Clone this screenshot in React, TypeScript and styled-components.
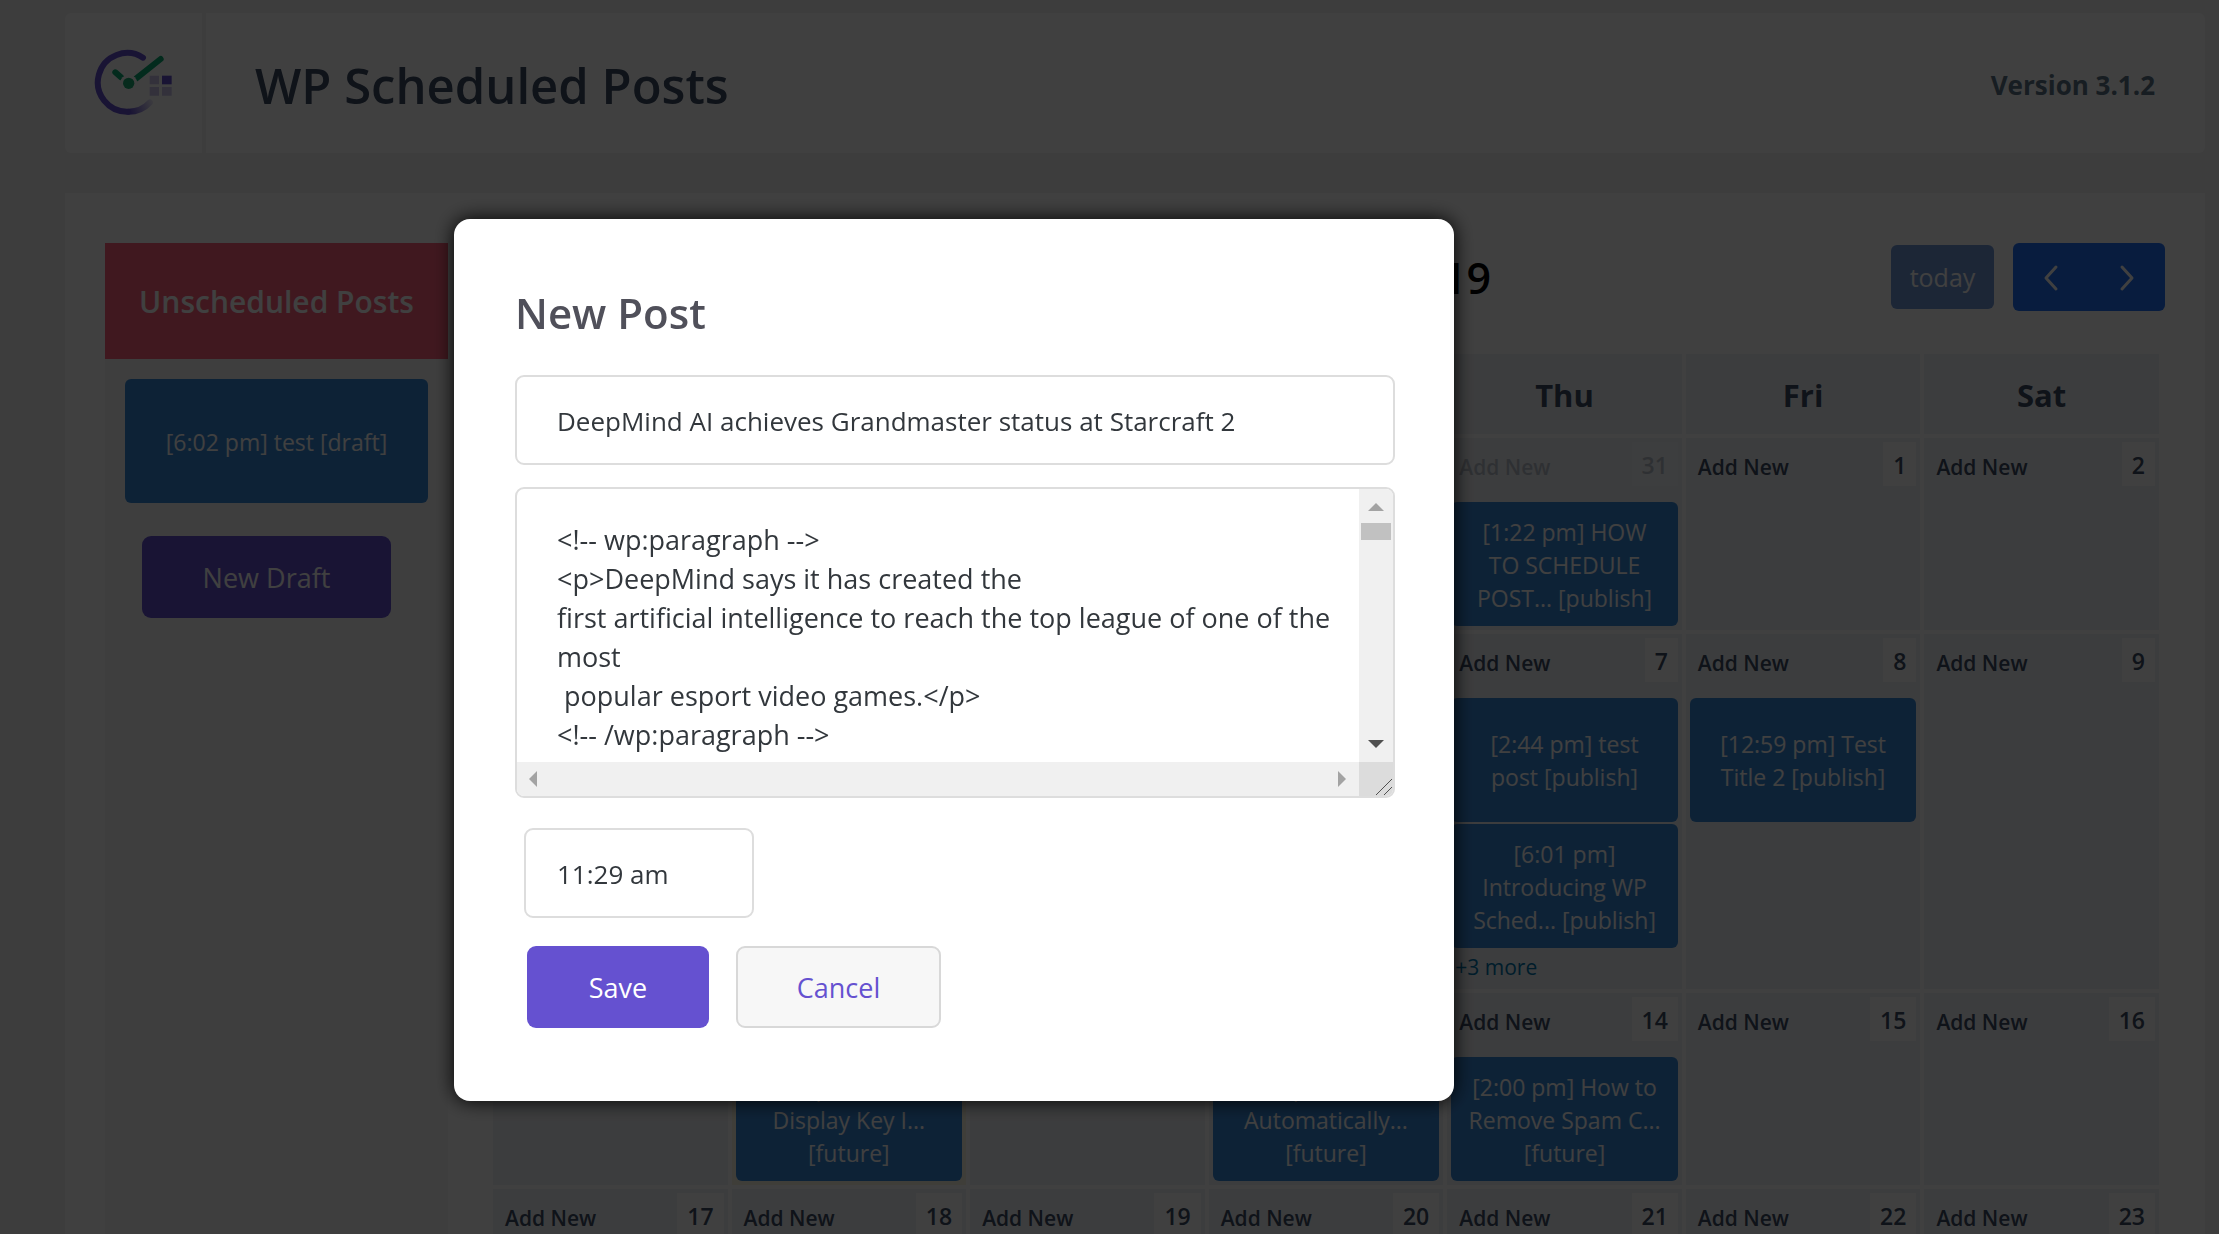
import React, { useState } from "react";
import styled, { createGlobalStyle, css } from "styled-components";

const GlobalStyle = createGlobalStyle`
  *, *::before, *::after { box-sizing: border-box; }
  body {
    margin: 0;
    background: #f1f1f1;
    font-family: "Open Sans", "Noto Sans", sans-serif;
    color: #3c4b64;
  }
  button, input, textarea { font: inherit; margin: 0; }
`;

const Page = styled.div`
  height: 100vh;
  overflow: hidden;
  padding: 13px 14px 0 65px;
`;

const Header = styled.header`
  display: flex;
  align-items: stretch;
  height: 140px;
  background: #fff;
  border-radius: 6px;
`;

const LogoCell = styled.div`
  display: flex;
  align-items: center;
  justify-content: center;
  width: 141px;
  border-right: 4px solid #f1f1f1;
`;

const HeaderTitle = styled.h1`
  flex: 1;
  margin: 0;
  padding: 3px 0 0 49px;
  align-self: center;
  font-size: 49px;
  line-height: 68px;
  font-weight: 600;
`;

const Version = styled.p`
  margin: 0;
  padding: 3px 50px 0 0;
  align-self: center;
  color: #5c7486;
  font-size: 26px;
  line-height: 36px;
  font-weight: 700;
`;

const Panel = styled.main`
  display: flex;
  gap: 41px;
  margin-top: 40px;
  padding: 50px 40px 0;
  background: #fff;
`;

const Sidebar = styled.aside`
  flex: none;
  width: 343px;
  min-height: 100vh;
  background: #f8f8f8;
`;

const SidebarTitle = styled.h2`
  margin: 0 0 20px;
  padding-top: 2px;
  background: #fd617c;
  color: #fff;
  font-size: 30px;
  line-height: 114px;
  font-weight: 600;
  text-align: center;
`;

const SidebarBody = styled.div`
  display: flex;
  flex-direction: column;
  align-items: flex-start;
  gap: 33px;
  padding: 0 20px;
`;

const EventCard = styled.div`
  display: flex;
  align-items: center;
  justify-content: center;
  width: 100%;
  height: 124px;
  padding-top: 2px;
  border-radius: 6px;
  background: #3788d8;
  color: #fff;
  font-size: 23px;
  line-height: 33px;
  text-align: center;
  white-space: pre-line;
`;

const buttonBase = css`
  height: 82px;
  padding: 2px 0 0;
  border-radius: 9px;
  font-size: 27px;
  line-height: 36px;
  cursor: pointer;
`;

const PrimaryButton = styled.button<{ $width: number; $weight?: number }>`
  ${buttonBase}
  width: ${(p) => p.$width}px;
  border: 0;
  background: #6551d0;
  color: #fff;
  font-weight: ${(p) => p.$weight ?? 400};
`;

const SecondaryButton = styled.button`
  ${buttonBase}
  width: 205px;
  border: 2px solid #d8d8d8;
  background: #f7f7f7;
  color: #6551d0;
`;

const DraftSlot = styled.div`
  padding-left: 17px;
`;

const Calendar = styled.section`
  flex: 1;
  min-width: 0;
`;

const Toolbar = styled.div`
  display: grid;
  grid-template-columns: 1fr auto 1fr;
  align-items: center;
  height: 68px;
  margin-bottom: 39px;
`;

const MonthTitle = styled.h2`
  grid-column: 2;
  margin: 0;
  padding-top: 2px;
  color: #000;
  font-size: 43px;
  line-height: 64px;
  font-weight: 600;
`;

const ToolbarActions = styled.div`
  display: flex;
  justify-content: flex-end;
  align-items: center;
  gap: 19px;
`;

const TodayButton = styled.button`
  width: 103px;
  height: 64px;
  padding: 0;
  border: 0;
  border-radius: 6px;
  background: #7098d8;
  color: #fff;
  font-size: 25px;
`;

const NavGroup = styled.div`
  display: flex;
  border-radius: 6px;
  overflow: hidden;
`;

const NavButton = styled.button`
  display: flex;
  align-items: center;
  justify-content: center;
  width: 76px;
  height: 68px;
  padding: 2px 0 0;
  border: 0;
  background: #2070f8;
  cursor: pointer;
`;

const MonthTable = styled.table`
  width: calc(100% - 2px);
  table-layout: fixed;
  border-spacing: 4px;
`;

const WeekdayCell = styled.th`
  height: 80px;
  padding: 2px 0 0;
  background: #f0f3f7;
  font-size: 31px;
  line-height: 42px;
  font-weight: 700;
`;

const DayCell = styled.td<{ $today?: boolean }>`
  height: 192px;
  padding: 4px;
  vertical-align: top;
  background: ${(p) => (p.$today ? "#fcf8e3" : "#f0f3f7")};
`;

const DayTop = styled.div<{ $muted?: boolean }>`
  display: flex;
  justify-content: space-between;
  height: 44px;
  margin-bottom: 16px;
  opacity: ${(p) => (p.$muted ? 0.3 : 1)};
`;

const AddNew = styled.button`
  padding: 5px 0 0 8px;
  border: 0;
  background: none;
  color: inherit;
  font-size: 21px;
  line-height: 32px;
  font-weight: 600;
  cursor: pointer;
`;

const DayNumber = styled.span`
  padding: 2px 10px 0;
  background: #fff;
  font-size: 23px;
  line-height: 42px;
  font-weight: 600;
`;

const EventList = styled.div`
  display: flex;
  flex-direction: column;
  gap: 2px;
`;

const MoreLink = styled.a`
  display: block;
  padding: 3px 4px 2px;
  color: #0073aa;
  font-size: 21px;
  line-height: 32px;
  text-decoration: none;
`;

const Overlay = styled.div`
  position: fixed;
  inset: 0;
  display: flex;
  align-items: flex-start;
  padding: 219px 0 0 454px;
  background: rgba(0, 0, 0, 0.75);
`;

const Modal = styled.form`
  width: 1000px;
  padding: 64px 59px 73px 61px;
  border-radius: 16px;
  background: #fff;
  box-shadow: 0 0 20px #000;
`;

const ModalTitle = styled.h2`
  margin: 0 0 32px;
  color: #50505a;
  font-size: 42px;
  line-height: 60px;
  font-weight: 600;
`;

const fieldBox = css`
  display: block;
  border: 2px solid #ddd;
  border-radius: 9px;
  background: #fff;
  color: #32373c;
`;

const TitleInput = styled.input`
  ${fieldBox}
  width: 100%;
  height: 90px;
  padding: 2px 40px 0;
  font-size: 26px;
  outline: none;
`;

const ContentBox = styled.div`
  ${fieldBox}
  display: grid;
  grid-template-columns: 1fr 34px;
  grid-template-rows: 273px 34px;
  margin: 22px 0 30px;
  font-size: 27px;
  overflow: hidden;
`;

const ContentArea = styled.textarea`
  display: block;
  width: 100%;
  height: 100%;
  padding: 31px 24px 0 40px;
  border: 0;
  outline: none;
  resize: none;
  overflow: hidden;
  background: none;
  color: inherit;
  line-height: 39px;
`;

const ScrollTrack = styled.div<{ $vertical?: boolean }>`
  display: flex;
  flex-direction: ${(p) => (p.$vertical ? "column" : "row")};
  justify-content: space-between;
  background: #f0f0f0;
`;

const ScrollStart = styled.div`
  display: flex;
  flex-direction: column;
  align-items: center;
`;

const ScrollArrow = styled.svg`
  display: block;
  width: 34px;
  height: 34px;
`;

const ScrollThumb = styled.div`
  width: 30px;
  height: 17px;
  background: #c1c1c1;
`;

const ResizeCorner = styled.svg`
  display: block;
  width: 34px;
  height: 34px;
  background: #dcdcdc;
`;

const TimeRow = styled.div`
  padding-left: 9px;
`;

const TimeInput = styled.input`
  ${fieldBox}
  width: 230px;
  height: 90px;
  padding: 2px 31px 0;
  font-size: 26px;
  outline: none;
`;

const Actions = styled.div`
  display: flex;
  gap: 27px;
  margin-top: 28px;
  padding-left: 12px;
`;

const Logo = () => (
  <svg width="80" height="70" viewBox="0 0 240 210" fill="none" role="img" aria-label="WP Scheduled Posts logo">
    <defs>
      <linearGradient id="arcFade" gradientUnits="userSpaceOnUse" x1="105" y1="185" x2="175" y2="155">
        <stop offset="0" stopColor="#6551d0" />
        <stop offset="1" stopColor="#6551d0" stopOpacity="0.1" />
      </linearGradient>
    </defs>
    <path d="M147 29 A88 88 0 1 0 103 191" stroke="#6551d0" strokeWidth="18" strokeLinecap="round" />
    <path d="M103 191 A88 88 0 0 0 168 163" stroke="url(#arcFade)" strokeWidth="18" strokeLinecap="round" />
    <path d="M64 73 L81 88" stroke="#0cac75" strokeWidth="18" strokeLinecap="round" />
    <path d="M200 33 L126 92" stroke="#0cac75" strokeWidth="18" strokeLinecap="round" />
    <circle cx="104" cy="106" r="26" fill="#fff" />
    <circle cx="104" cy="106" r="17" fill="#1eac75" />
    <path d="M167 83h28v26h-28zM167 117h28v26h-28zM204 117h29v26h-29z" fill="#c9c3ec" />
    <path d="M204 83h29v26h-29z" fill="#6551d0" />
  </svg>
);

const Chevron = ({ d }: { d: string }) => (
  <svg width="18" height="28" viewBox="0 0 18 28" fill="none" stroke="#fff" strokeWidth="3" strokeLinecap="round" strokeLinejoin="round" aria-hidden="true">
    <path d={d} />
  </svg>
);

type Day = { n: number; muted?: boolean; today?: boolean; events?: string[]; more?: string };

const weekdays = ["Sun", "Mon", "Tue", "Wed", "Thu", "Fri", "Sat"];

const weeks: Day[][] = [
  [
    { n: 27, muted: true },
    { n: 28, muted: true },
    { n: 29, muted: true },
    { n: 30, muted: true },
    { n: 31, muted: true, events: ["[1:22 pm] HOW\nTO SCHEDULE\nPOST... [publish]"] },
    { n: 1 },
    { n: 2 },
  ],
  [
    { n: 3 },
    { n: 4 },
    { n: 5 },
    { n: 6 },
    {
      n: 7,
      events: ["[2:44 pm] test\npost [publish]", "[6:01 pm]\nIntroducing WP\nSched... [publish]"],
      more: "+3 more",
    },
    { n: 8, events: ["[12:59 pm] Test\nTitle 2 [publish]"] },
    { n: 9 },
  ],
  [
    { n: 10 },
    { n: 11, today: true, events: ["[2:00 pm] How to\nDisplay Key I...\n[future]"] },
    { n: 12 },
    { n: 13, events: ["[2:00 pm] How to\nAutomatically...\n[future]"] },
    { n: 14, events: ["[2:00 pm] How to\nRemove Spam C...\n[future]"] },
    { n: 15 },
    { n: 16 },
  ],
  [{ n: 17 }, { n: 18 }, { n: 19 }, { n: 20 }, { n: 21 }, { n: 22 }, { n: 23 }],
];

const postContent = `<!-- wp:paragraph -->
<p>DeepMind says it has created the
first artificial intelligence to reach the top league of one of the most
 popular esport video games.</p>
<!-- /wp:paragraph -->`;

const MonthView = () => (
  <MonthTable>
    <thead>
      <tr>
        {weekdays.map((w) => (
          <WeekdayCell key={w} scope="col">
            {w}
          </WeekdayCell>
        ))}
      </tr>
    </thead>
    <tbody>
      {weeks.map((week, i) => (
        <tr key={i}>
          {week.map((day) => (
            <DayCell key={day.n} $today={day.today}>
              <DayTop $muted={day.muted}>
                <AddNew type="button">Add New</AddNew>
                <DayNumber>{day.n}</DayNumber>
              </DayTop>
              {day.events && (
                <EventList>
                  {day.events.map((e) => (
                    <EventCard key={e}>{e}</EventCard>
                  ))}
                </EventList>
              )}
              {day.more && <MoreLink href="#more">{day.more}</MoreLink>}
            </DayCell>
          ))}
        </tr>
      ))}
    </tbody>
  </MonthTable>
);

const NewPostDialog = () => {
  const [title, setTitle] = useState("DeepMind AI achieves Grandmaster status at Starcraft 2");
  const [content, setContent] = useState(postContent);
  const [time, setTime] = useState("11:29 am");

  return (
    <Overlay>
      <Modal role="dialog" aria-labelledby="new-post-title" onSubmit={(e) => e.preventDefault()}>
        <ModalTitle id="new-post-title">New Post</ModalTitle>
        <TitleInput aria-label="Title" value={title} onChange={(e) => setTitle(e.target.value)} />
        <ContentBox>
          <ContentArea aria-label="Content" value={content} onChange={(e) => setContent(e.target.value)} />
          <ScrollTrack $vertical aria-hidden="true">
            <ScrollStart>
              <ScrollArrow viewBox="0 0 34 34">
                <path d="M9 22h16l-8-8z" fill="#a3a3a3" />
              </ScrollArrow>
              <ScrollThumb />
            </ScrollStart>
            <ScrollArrow viewBox="0 0 34 34">
              <path d="M9 12h16l-8 8z" fill="#505050" />
            </ScrollArrow>
          </ScrollTrack>
          <ScrollTrack aria-hidden="true">
            <ScrollArrow viewBox="0 0 34 34">
              <path d="M20 9v16l-8-8z" fill="#a3a3a3" />
            </ScrollArrow>
            <ScrollArrow viewBox="0 0 34 34">
              <path d="M13 9v16l8-8z" fill="#a3a3a3" />
            </ScrollArrow>
          </ScrollTrack>
          <ResizeCorner viewBox="0 0 34 34" aria-hidden="true">
            <path d="M17 33L33 17M25 33L33 25" stroke="#505050" />
          </ResizeCorner>
        </ContentBox>
        <TimeRow>
          <TimeInput aria-label="Time" value={time} onChange={(e) => setTime(e.target.value)} />
        </TimeRow>
        <Actions>
          <PrimaryButton type="submit" $width={182} $weight={500}>
            Save
          </PrimaryButton>
          <SecondaryButton type="button">Cancel</SecondaryButton>
        </Actions>
      </Modal>
    </Overlay>
  );
};

export default function App() {
  return (
    <>
      <GlobalStyle />
      <Page>
        <Header>
          <LogoCell>
            <Logo />
          </LogoCell>
          <HeaderTitle>WP Scheduled Posts</HeaderTitle>
          <Version>Version 3.1.2</Version>
        </Header>
        <Panel>
          <Sidebar>
            <SidebarTitle>Unscheduled Posts</SidebarTitle>
            <SidebarBody>
              <EventCard>[6:02 pm] test [draft]</EventCard>
              <DraftSlot>
                <PrimaryButton type="button" $width={249}>
                  New Draft
                </PrimaryButton>
              </DraftSlot>
            </SidebarBody>
          </Sidebar>
          <Calendar>
            <Toolbar>
              <MonthTitle>November 2019</MonthTitle>
              <ToolbarActions>
                <TodayButton type="button">today</TodayButton>
                <NavGroup>
                  <NavButton type="button" aria-label="Previous month">
                    <Chevron d="M14 3L4 14l10 11" />
                  </NavButton>
                  <NavButton type="button" aria-label="Next month">
                    <Chevron d="M4 3l10 11L4 25" />
                  </NavButton>
                </NavGroup>
              </ToolbarActions>
            </Toolbar>
            <MonthView />
          </Calendar>
        </Panel>
      </Page>
      <NewPostDialog />
    </>
  );
}
